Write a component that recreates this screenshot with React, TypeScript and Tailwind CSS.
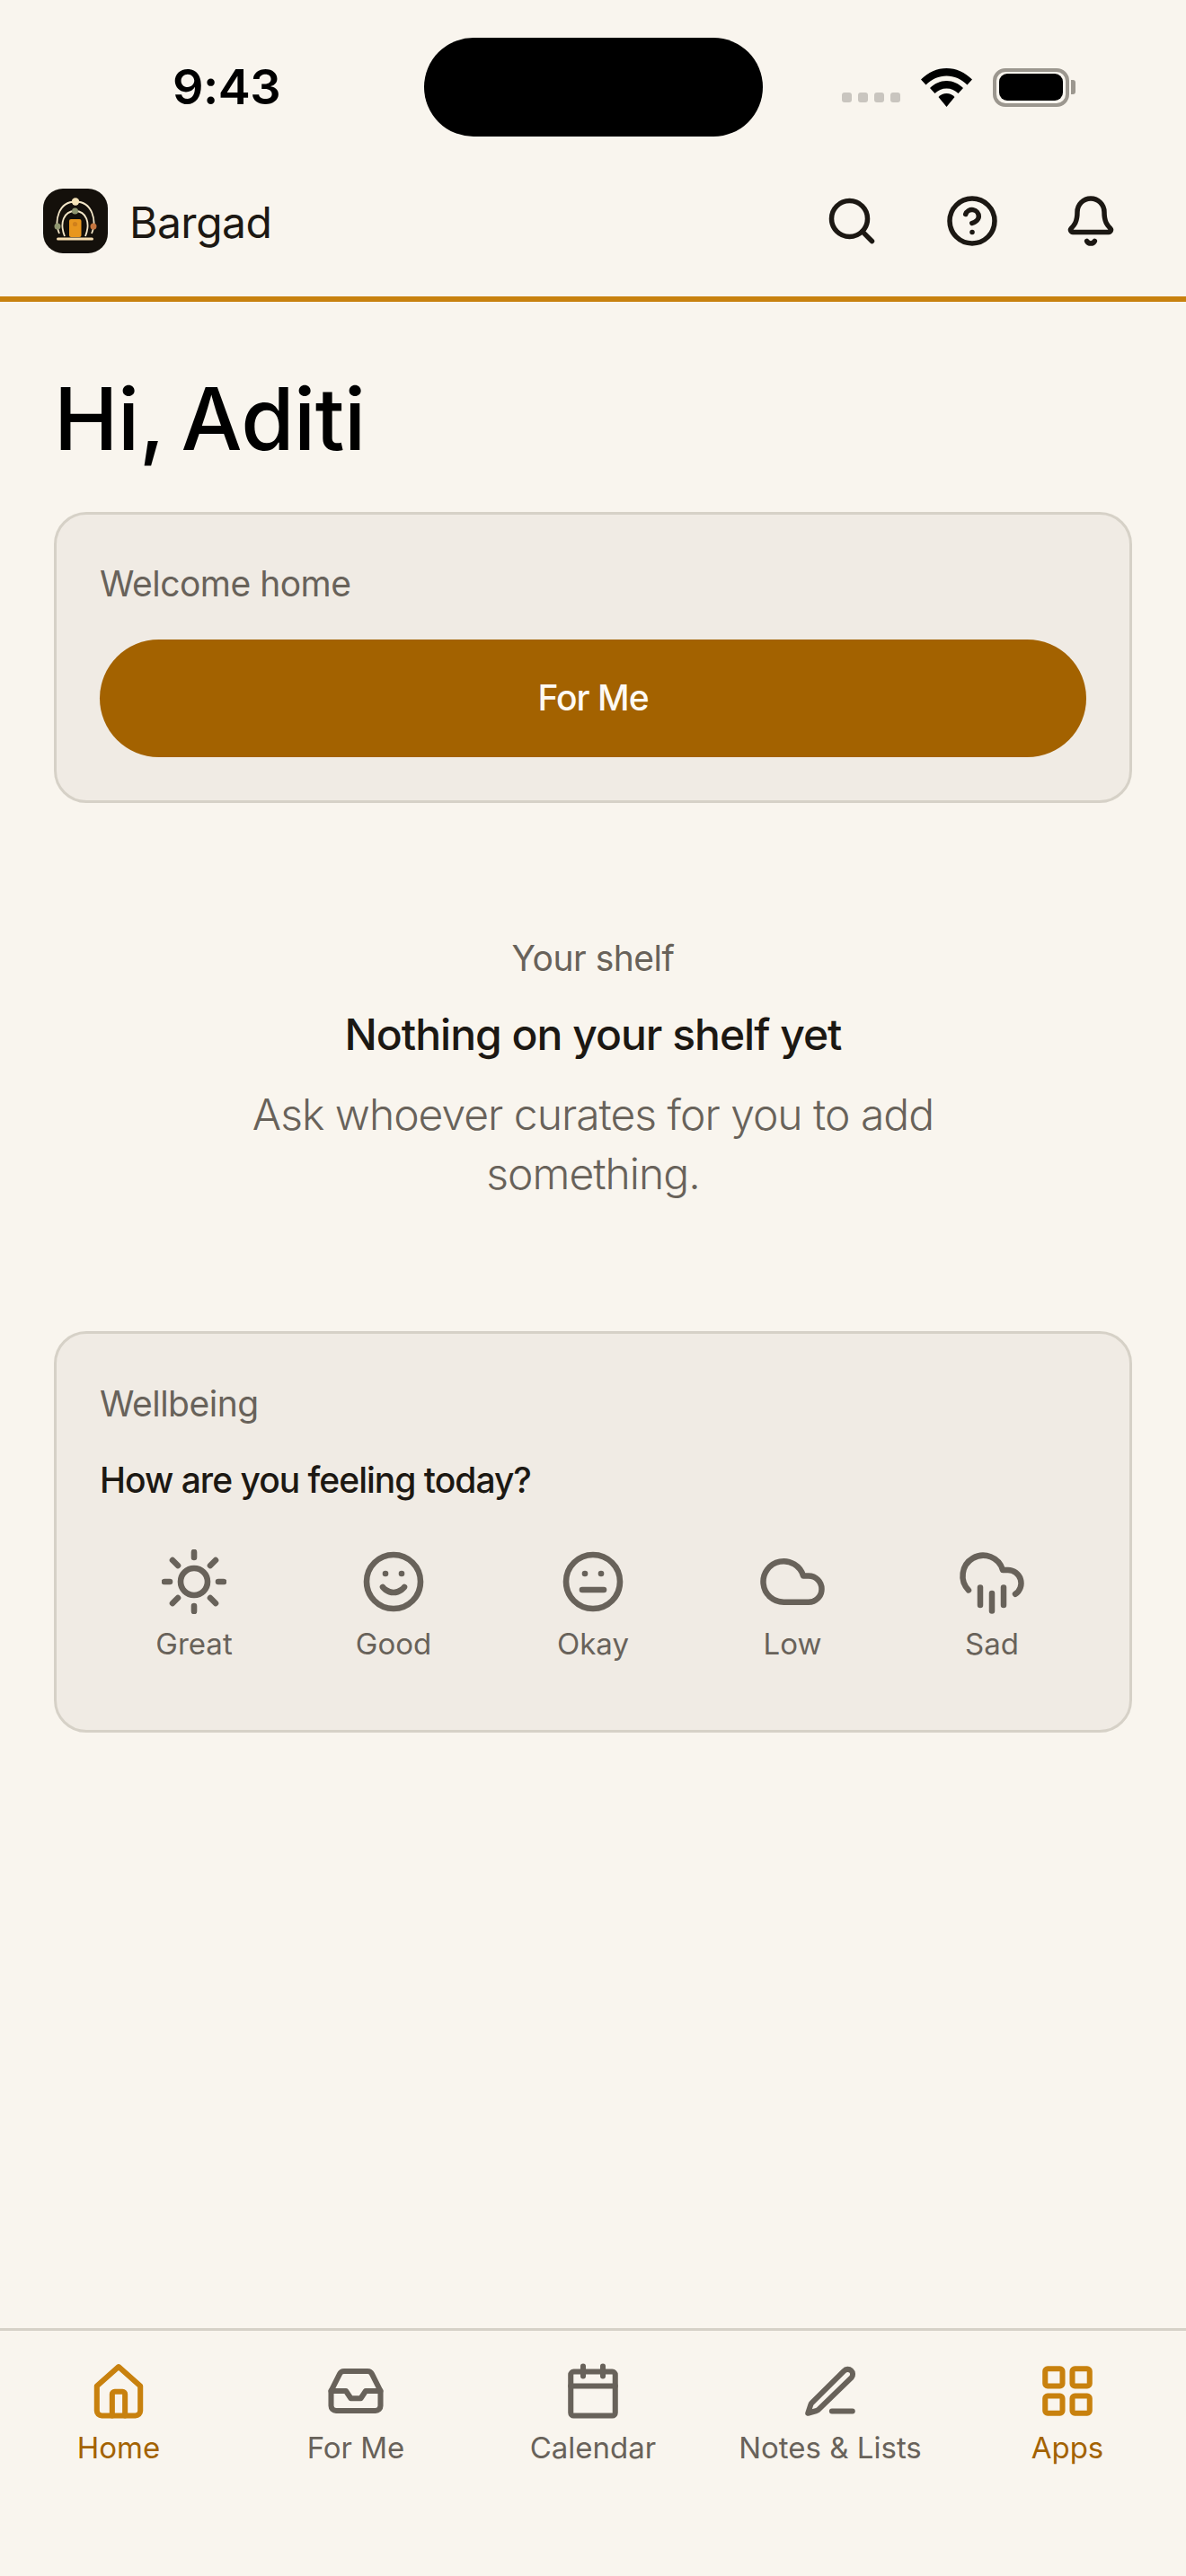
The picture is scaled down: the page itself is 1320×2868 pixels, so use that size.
import { Search, CircleHelp, Bell, Smile, Meh, Cloud, CloudRain, Inbox, LayoutGrid } from "lucide-react";

const font = { fontFamily: "Inter, 'Liberation Sans', sans-serif" };

function Logo() {
  return (
    <svg width="72" height="72" viewBox="0 0 72 72" fill="none">
      <rect width="72" height="72" rx="22" fill="#14100b" />
      <path d="M18 50 C12 36 17 14.5 36 14.5 C55 14.5 60 36 54 50" stroke="#f3e6c8" strokeWidth="1.8" />
      <path d="M24 53 C18 38 23 25 35.5 25 C48 25 53 38 47 53" stroke="#f3e6c8" strokeWidth="1.8" />
      <rect x="29" y="34" width="13.5" height="20" rx="2" fill="#e8961e" />
      <circle cx="35.5" cy="39.5" r="2.6" fill="#d0801c" />
      <rect x="15" y="54.5" width="41" height="3" rx="1.5" fill="#f5dcb0" />
      <circle cx="36" cy="14.5" r="4.2" fill="#f5e3b8" />
      <circle cx="35.5" cy="25" r="3.5" fill="#8f9670" />
      <circle cx="16" cy="42" r="3.5" fill="#8f9670" />
      <circle cx="56" cy="42" r="3.5" fill="#c4753f" />
    </svg>
  );
}

function Sun() {
  return (
    <svg width="72" height="72" viewBox="0 0 24 24" fill="none" stroke="currentColor" strokeWidth="2.2" strokeLinecap="round">
      <circle cx="12" cy="12" r="5" />
      <path d="M12 1v2M12 21v2M1 12h2M21 12h2M4 4l2 2M18 18l2 2M4 20l2-2M18 6l2-2" />
    </svg>
  );
}

function Wifi() {
  return (
    <svg width="57" height="43" viewBox="0 0 57 43" fill="#000">
      <path d="M28.5 0C39 0 49 4.500 57 12.500L51.500 18.500C45 12 37 8.500 28.500 8.500C20 8.500 12 12 5.500 18.500L0 12.500C8 4.500 18 0 28.500 0Z" />
      <path d="M28.500 14C35.500 14 42 17 47 22L41.500 28C38 24.500 33.500 22.500 28.500 22.500C23.500 22.500 19 24.500 15.500 28L10 22C15 17 21.500 14 28.500 14Z" />
      <path d="M28.500 28C32 28 35 29.500 37.500 32L28.500 43L19.500 32C22 29.500 25 28 28.500 28Z" />
    </svg>
  );
}

function NavSvg({ children }: { children: React.ReactNode }) {
  return (
    <svg width="66" height="66" viewBox="0 0 24 24" fill="none" stroke="currentColor" strokeWidth="2.2" strokeLinecap="round" strokeLinejoin="round">
      {children}
    </svg>
  );
}

function Mood({ icon, label }: { icon: React.ReactNode; label: string }) {
  return (
    <div className="flex flex-col items-center pt-[12px] gap-[9px]">
      {icon}
      <span className="text-[33px] leading-[48px]">{label}</span>
    </div>
  );
}

function NavItem({ icon, label, active }: { icon: React.ReactNode; label: string; active?: boolean }) {
  return (
    <div className="flex flex-col items-center">
      <div className={active ? "text-[#c8810e]" : "text-[#68625a]"}>{icon}</div>
      <span className={active ? "mt-[3px] text-[33px] leading-[54px] text-[#a36200]" : "mt-[3px] text-[33px] leading-[54px] text-[#68625a]"}>{label}</span>
    </div>
  );
}

export default function App() {
  return (
    <div style={font} className="flex min-h-[2868px] w-[1320px] flex-col bg-[#f9f5ee] text-[#1c1813]">
      <div className="grid grid-cols-[472px_377px_1fr] pt-[42px]">
        <div className="flex items-center justify-center pl-[32px] pb-[2px] text-[54px] font-semibold tracking-[-0.5px] text-black">9:43</div>
        <div className="h-[110px] rounded-full bg-black" />
        <div className="flex items-center gap-[23px] pl-[88px]">
          <div className="mt-[23px] flex gap-[7px] self-center">
            <span className="h-[11px] w-[11px] rounded-[3px] bg-[#c9c5bf]" />
            <span className="h-[11px] w-[11px] rounded-[3px] bg-[#c9c5bf]" />
            <span className="h-[11px] w-[11px] rounded-[3px] bg-[#c9c5bf]" />
            <span className="h-[11px] w-[11px] rounded-[3px] bg-[#c9c5bf]" />
          </div>
          <Wifi />
          <div className="flex items-center">
            <div className="flex h-[43px] w-[85px] items-center justify-center rounded-[14px] border-[4px] border-[#9c978f]">
              <div className="h-[30px] w-[71px] rounded-[9px] bg-black" />
            </div>
            <div className="ml-[2px] h-[16px] w-[5px] rounded-r-[3px] bg-[#9c978f]" />
          </div>
        </div>
      </div>

      <header className="flex items-center justify-between border-b-[6px] border-[#c8810e] pb-[48px] pl-[48px] pr-[76px] pt-[58px]">
        <div className="flex items-center gap-[24px]">
          <Logo />
          <span className="pt-[3px] text-[48px] leading-[60px] tracking-[-0.5px]">Bargad</span>
        </div>
        <div className="flex items-center gap-[72px]">
          <Search size={60} strokeWidth={2.2} className="-translate-x-[2px]" />
          <CircleHelp size={60} strokeWidth={2.2} />
          <Bell size={60} strokeWidth={2.2} />
        </div>
      </header>

      <main className="flex flex-1 flex-col px-[60px]">
        <h1 className="pt-[80px] pb-[54px] text-[96px] leading-[100px] font-medium tracking-[-0.5px] [word-spacing:-6px] text-black">Hi, Aditi</h1>

        <section className="rounded-[36px] border-[3px] border-[#d6d1c7] bg-[#f0ebe4] p-[48px]">
          <div className="mb-[33px] text-[39px] leading-[58px] tracking-[-0.5px] text-[#68625a]">Welcome home</div>
          <div className="flex h-[131px] items-center justify-center rounded-full bg-[#a36200] text-[39px] font-medium tracking-[-1px] text-[#fdf9f3]">For Me</div>
        </section>

        <section className="flex flex-col items-center pt-[144px] pb-[142px] text-center">
          <div className="text-[39px] leading-[58px] tracking-[-0.5px] text-[#68625a]">Your shelf</div>
          <div className="mt-[26px] text-[48px] leading-[60px] font-medium tracking-[-1px]">Nothing on your shelf yet</div>
          <p className="mt-[26px] w-[800px] text-[48px] leading-[66px] font-light tracking-[-1px] text-[#68625a]">Ask whoever curates for you to add something.</p>
        </section>

        <section className="rounded-[36px] border-[3px] border-[#d6d1c7] bg-[#f0ebe4] px-[48px] pb-[72px] pt-[48px]">
          <div className="pt-[1px] text-[39px] leading-[58px] tracking-[-0.5px] text-[#68625a]">Wellbeing</div>
          <div className="mt-[26px] text-[39px] leading-[60px] font-medium tracking-[-1px]">How are you feeling today?</div>
          <div className="mt-[35px] grid grid-cols-5 gap-[12px] text-[#68625a]">
            <Mood icon={<Sun />} label="Great" />
            <Mood icon={<Smile size={72} strokeWidth={2.2} />} label="Good" />
            <Mood icon={<Meh size={72} strokeWidth={2.2} />} label="Okay" />
            <Mood icon={<Cloud size={78} className="-m-[3px]" />} label="Low" />
            <Mood icon={<CloudRain size={78} className="-m-[3px]" />} label="Sad" />
          </div>
        </section>
      </main>

      <nav className="grid h-[276px] grid-cols-5 border-t-[3px] border-[#d6d1c7] pt-[34px]">
        <NavItem
          active
          icon={
            <NavSvg>
              <path d="M12 2.200L20.800 10V20a2 2 0 0 1-2 2H5.200a2 2 0 0 1-2-2V10Z" />
              <path d="M14.600 22V13.300a1 1 0 0 0-1-1h-3.200a1 1 0 0 0-1 1V22" />
            </NavSvg>
          }
          label="Home"
        />
        <NavItem icon={<Inbox size={66} strokeWidth={2.2} />} label="For Me" />
        <NavItem
          icon={
            <NavSvg>
              <rect x="3" y="4.200" width="18" height="17.800" rx="1.200" />
              <path d="M8 2v4M16 2v4M3 10h18" />
            </NavSvg>
          }
          label="Calendar"
        />
        <NavItem
          icon={
            <NavSvg>
              <path d="M20.600 6.600a2 2 0 0 0-3-2.700L4.600 16.800a2 2 0 0 0-.5.800L3 21l3.500-1a2 2 0 0 0 .8-.5z" />
              <path d="M12.700 20.200h8.300" />
            </NavSvg>
          }
          label="Notes &amp; Lists"
        />
        <NavItem active icon={<LayoutGrid size={66} strokeWidth={2.2} />} label="Apps" />
      </nav>
    </div>
  );
}
